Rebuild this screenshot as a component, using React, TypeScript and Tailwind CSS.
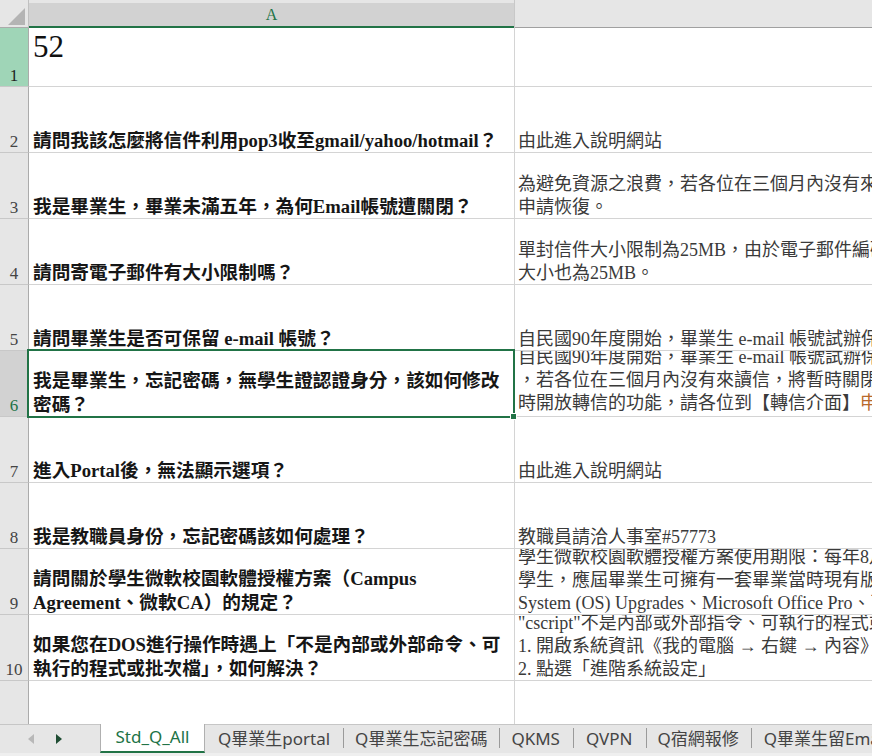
import React from "react";

type Row = { n: number; a: string[]; b: React.ReactNode[]; bpb?: string };

const rows: Row[] = [
  {
    n: 2,
    a: ["請問我該怎麼將信件利用pop3收至gmail/yahoo/hotmail？"],
    b: ["由此進入說明網站"],
  },
  {
    n: 3,
    a: ["我是畢業生，畢業未滿五年，為何Email帳號遭關閉？"],
    b: [
      "為避免資源之浪費，若各位在三個月內沒有來讀信，將暫時關閉您的帳號，如需使用請",
      "申請恢復。",
    ],
  },
  {
    n: 4,
    a: ["請問寄電子郵件有大小限制嗎？"],
    b: [
      "單封信件大小限制為25MB，由於電子郵件編碼的關係，實際可寄送的附件",
      "大小也為25MB。",
    ],
  },
  {
    n: 5,
    a: ["請問畢業生是否可保留 e-mail 帳號？"],
    b: ["自民國90年度開始，畢業生 e-mail 帳號試辦保留五年"],
  },
  {
    n: 6,
    a: ["我是畢業生，忘記密碼，無學生證認證身分，該如何修改", "密碼？"],
    b: [
      "自民國90年度開始，畢業生 e-mail 帳號試辦保留五年",
      "，若各位在三個月內沒有來讀信，將暫時關閉帳號",
      <>
        時開放轉信的功能，請各位到【轉信介面】
        <span className="text-[#b8692c]">申請</span>
      </>,
    ],
    bpb: "pb-[3px]",
  },
  {
    n: 7,
    a: ["進入Portal後，無法顯示選項？"],
    b: ["由此進入說明網站"],
  },
  {
    n: 8,
    a: ["我是教職員身份，忘記密碼該如何處理？"],
    b: ["教職員請洽人事室#57773"],
  },
  {
    n: 9,
    a: ["請問關於學生微軟校園軟體授權方案（Campus", "Agreement、微軟CA）的規定？"],
    b: [
      "學生微軟校園軟體授權方案使用期限：每年8月至隔年",
      "學生，應屆畢業生可擁有一套畢業當時現有版本",
      "System (OS) Upgrades、Microsoft Office Pro、可",
    ],
  },
  {
    n: 10,
    a: ["如果您在DOS進行操作時遇上「不是內部或外部命令、可", "執行的程式或批次檔」，如何解決？"],
    b: [
      "\"cscript\"不是內部或外部指令、可執行的程式或批次檔",
      "1. 開啟系統資訊《我的電腦 → 右鍵 → 內容》",
      "2. 點選「進階系統設定」",
    ],
  },
];

const serif = "font-['Liberation_Serif','Noto_Sans_CJK_TC',serif]";

function RowHeader({ n, h }: { n: number; h: string }) {
  const cls =
    n === 1
      ? "bg-[#9fd5b7] text-[#1e1e1e]"
      : n === 6
      ? "bg-[#d2d2d2] text-[#217346]"
      : "bg-[#e6e6e6] text-[#444]";
  return (
    <div
      className={`w-[29px] shrink-0 ${h} ${cls} border-r border-r-[#ababab] border-b border-b-[#c8c8c8] flex items-end justify-center text-[17px] leading-[20px] ${serif}`}
    >
      {n}
    </div>
  );
}

export default function App() {
  return (
    <div className="relative w-[872px] h-[756px] overflow-hidden bg-white flex flex-col">
      {/* column header */}
      <div className="flex h-[28px] shrink-0">
        <div className="w-[29px] shrink-0 bg-[#e6e6e6] border-r border-r-[#c0c0c0] border-b border-b-[#ababab] relative">
          <svg className="absolute left-[8px] top-[8px]" width="17" height="17" viewBox="0 0 17 17">
            <polygon points="17,0 17,17 0,17" fill="#b4b4b4" />
          </svg>
        </div>
        <div className="w-[486px] shrink-0 flex flex-col bg-[#e6e6e6] border-r border-r-[#c8c8c8]">
          <div className="h-[3px] bg-[#e6e6e6]" />
          <div className={`flex-1 bg-[#d2d2d2] flex items-center justify-center text-[16px] leading-none text-[#217346] ${serif}`}>
            A
          </div>
          <div className="h-[2px] bg-[#217346]" />
        </div>
        <div className="flex-1 bg-[#e6e6e6] border-b border-b-[#a0a0a0]" />
      </div>

      {/* row 1 */}
      <div className="flex h-[59px] shrink-0">
        <RowHeader n={1} h="h-[59px]" />
        <div className="w-[486px] shrink-0 border-r border-r-[#d4d4d4] border-b border-b-[#d4d4d4] px-[4px] pt-[2px]">
          <div className={`text-[31px] leading-[34px] text-[#111] ${serif}`}>52</div>
        </div>
        <div className="flex-1 border-b border-b-[#d4d4d4]" />
      </div>

      {rows.map((r) => (
        <div key={r.n} className="flex h-[66px] shrink-0">
          <RowHeader n={r.n} h="h-[66px]" />
          <div
            className={`w-[486px] shrink-0 border-r border-r-[#d4d4d4] border-b border-b-[#d4d4d4] pl-[4px] pr-[2px] pb-[1px] flex flex-col justify-end overflow-hidden whitespace-nowrap font-bold text-[18.67px] leading-[24px] text-[#161616] ${serif}`}
          >
            {r.a.map((t, i) => (
              <div key={i} className="relative top-[2px]">
                {t}
              </div>
            ))}
          </div>
          <div
            className={`flex-1 min-w-0 border-b border-b-[#d4d4d4] pl-[3px] ${r.bpb ?? "pb-[1px]"} flex flex-col justify-end overflow-hidden whitespace-nowrap text-[18px] leading-[23px] text-[#3a3a3a] ${serif}`}
          >
            {r.b.map((t, i) => (
              <div key={i} className="shrink-0 relative top-[2px]">
                {t}
              </div>
            ))}
          </div>
        </div>
      ))}

      {/* filler row */}
      <div className="flex flex-1">
        <div className="w-[29px] shrink-0 bg-[#e6e6e6] border-r border-r-[#ababab]" />
        <div className="w-[486px] shrink-0 border-r border-r-[#d4d4d4]" />
        <div className="flex-1" />
      </div>

      {/* sheet tabs */}
      <div className="h-[32px] shrink-0 bg-[#e6e6e6] border-t border-t-[#c6c6c6] border-b-[3px] border-b-[#efefef] flex items-stretch font-['Noto_Sans','Noto_Sans_CJK_TC',sans-serif] text-[17px] text-[#444]">
        <div className="w-[100px] shrink-0 flex items-center">
          <svg className="ml-[28px]" width="6" height="10" viewBox="0 0 6 10">
            <polygon points="6,0 6,10 0,5" fill="#b8b8b8" />
          </svg>
          <svg className="ml-[22px]" width="6" height="10" viewBox="0 0 6 10">
            <polygon points="0,0 0,10 6,5" fill="#1f4d33" />
          </svg>
        </div>
        <div className="w-[105px] shrink-0 bg-white border-l border-r border-[#b0b0b0] border-b-2 border-b-[#217346] flex items-center justify-center text-[#217346] leading-none -mt-[1px] pb-[2px]">
          Std_Q_All
        </div>
        <div className="flex items-center whitespace-nowrap leading-none pb-[2px]">
          <span className="ml-[13px]">Q畢業生portal</span>
          <span className="ml-[13px] w-px h-[20px] bg-[#9a9a9a]" />
          <span className="ml-[11px]">Q畢業生忘記密碼</span>
          <span className="ml-[12px] w-px h-[20px] bg-[#9a9a9a]" />
          <span className="ml-[11px]">QKMS</span>
          <span className="ml-[13px] w-px h-[20px] bg-[#9a9a9a]" />
          <span className="ml-[12px]">QVPN</span>
          <span className="ml-[14px] w-px h-[20px] bg-[#9a9a9a]" />
          <span className="ml-[10px]">Q宿網報修</span>
          <span className="ml-[12px] w-px h-[20px] bg-[#9a9a9a]" />
          <span className="ml-[12px]">Q畢業生留Email</span>
        </div>
      </div>

      {/* selection box around A6 */}
      <div className="absolute left-[27px] top-[349px] w-[488px] h-[69px] border-2 border-[#217346] pointer-events-none" />
      <div className="absolute left-[510px] top-[413px] w-[7px] h-[7px] bg-[#217346] border border-white pointer-events-none" />
    </div>
  );
}
